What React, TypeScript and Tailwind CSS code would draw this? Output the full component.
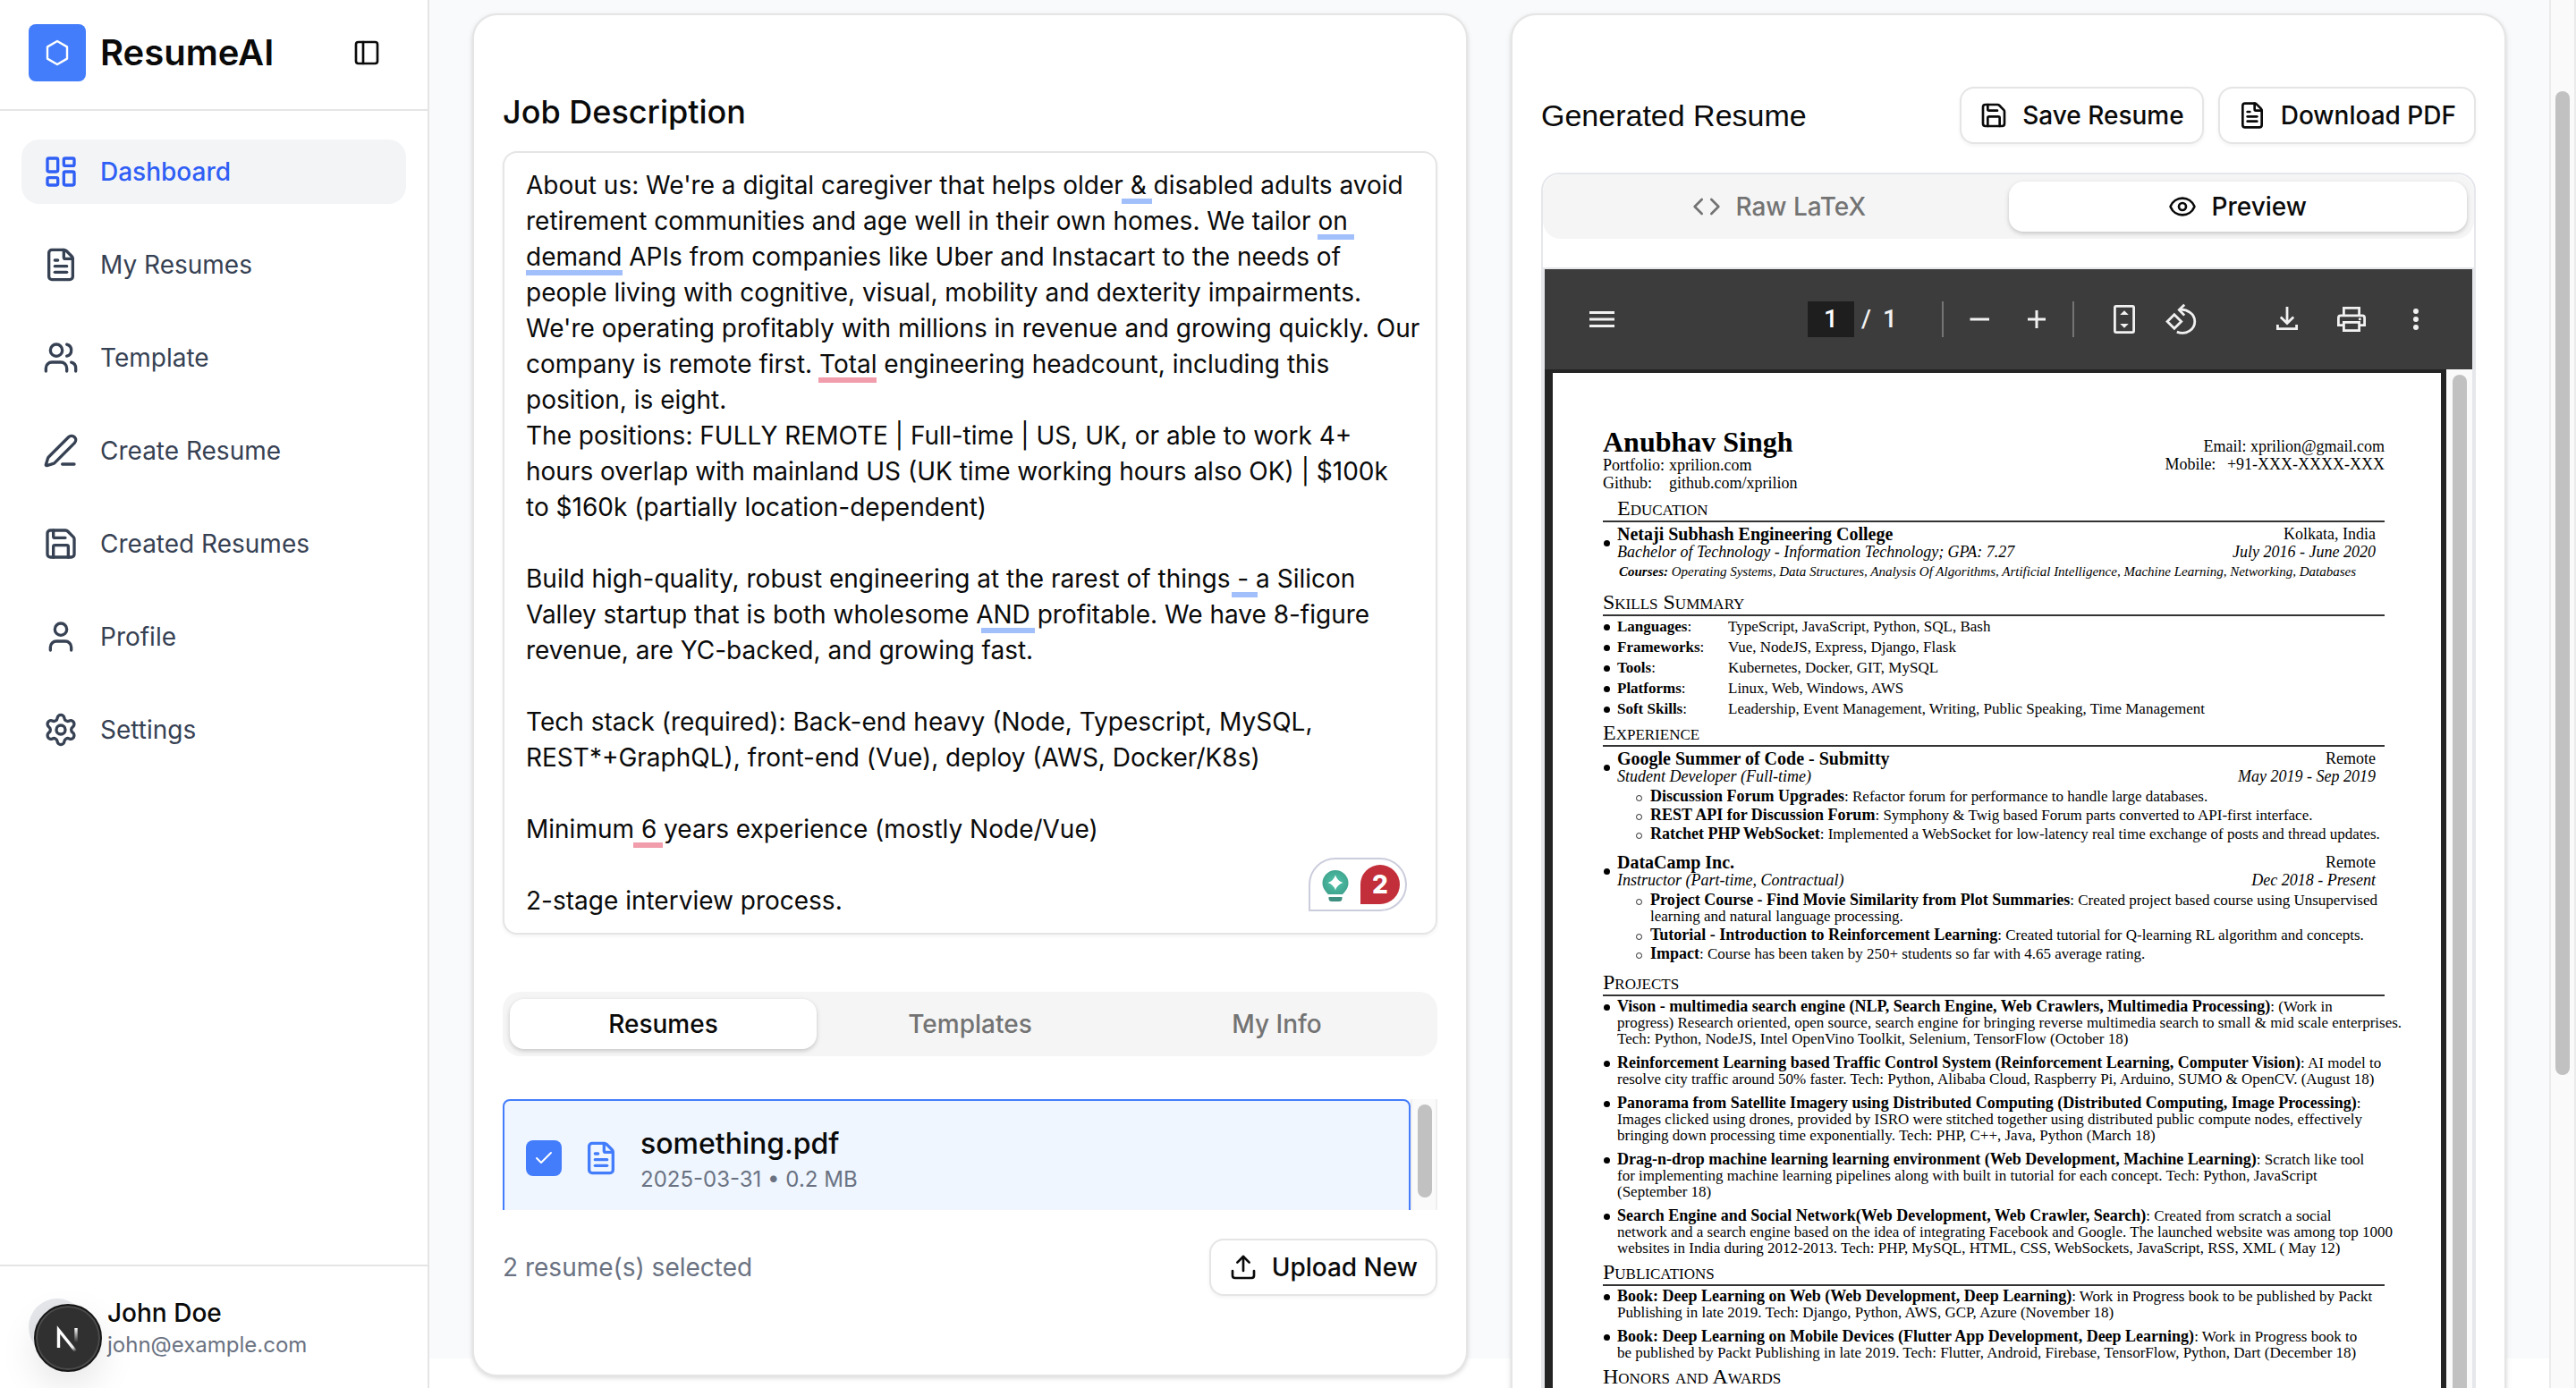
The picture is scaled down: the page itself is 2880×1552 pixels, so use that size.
import type { ComponentType, ReactNode } from "react";
import {
  Check,
  Code,
  Eye,
  FileText,
  LayoutDashboard,
  PanelLeft,
  PenLine,
  Save,
  Settings,
  Upload,
  User,
  Users,
} from "lucide-react";

type IconType = ComponentType<{ className?: string; strokeWidth?: number }>;

const NAV: { label: string; icon: IconType; active?: boolean }[] = [
  { label: "Dashboard", icon: LayoutDashboard, active: true },
  { label: "My Resumes", icon: FileText },
  { label: "Template", icon: Users },
  { label: "Create Resume", icon: PenLine },
  { label: "Created Resumes", icon: Save },
  { label: "Profile", icon: User },
  { label: "Settings", icon: Settings },
];

const JOB_TEXT = `About us: We're a digital caregiver that helps older & disabled adults avoid retirement communities and age well in their own homes. We tailor on demand APIs from companies like Uber and Instacart to the needs of people living with cognitive, visual, mobility and dexterity impairments. We're operating profitably with millions in revenue and growing quickly. Our company is remote first. Total engineering headcount, including this position, is eight.
The positions: FULLY REMOTE | Full-time | US, UK, or able to work 4+ hours overlap with mainland US (UK time working hours also OK) | $100k
to $160k (partially location-dependent)

Build high-quality, robust engineering at the rarest of things - a Silicon Valley startup that is both wholesome AND profitable. We have 8-figure revenue, are YC-backed, and growing fast.

Tech stack (required): Back-end heavy (Node, Typescript, MySQL, REST*+GraphQL), front-end (Vue), deploy (AWS, Docker/K8s)

Minimum 6 years experience (mostly Node/Vue)

2-stage interview process.`;

function Sidebar() {
  return (
    <aside className="flex w-[480px] shrink-0 flex-col border-r-2 border-[#e5e5e5] bg-white">
      <div className="flex items-center gap-4 border-b-2 border-[#e5e5e5] px-8 pt-[27px] pb-[31px]">
        <div className="flex size-16 items-center justify-center rounded-lg bg-[#437dfc]">
          <svg viewBox="0 0 32 32" className="size-8" fill="none" stroke="#fff" strokeWidth="2.4" strokeLinejoin="round">
            <path d="M16 3 27 9.4V22.6L16 29 5 22.6V9.4Z" />
          </svg>
        </div>
        <span className="flex-1 text-[40px] leading-[56px] font-semibold">ResumeAI</span>
        <button type="button" aria-label="Toggle sidebar" className="mr-5 flex size-8 items-center justify-center">
          <PanelLeft className="size-8" />
        </button>
      </div>
      <nav className="flex flex-1 flex-col gap-8 px-6 pt-8">
        {NAV.map(({ label, icon: Icon, active }) => (
          <a
            key={label}
            href="#"
            className={
              active
                ? "flex h-[72px] items-center gap-6 rounded-[20px] bg-[#f3f4f6] px-6 text-[28px] font-medium text-[#2f5ff5]"
                : "flex h-[72px] items-center gap-6 rounded-[20px] px-6 text-[28px] text-[#364153]"
            }
          >
            <Icon className="size-10" />
            {label}
          </a>
        ))}
      </nav>
      <div className="flex items-center gap-6 border-t-2 border-[#e5e5e5] p-8">
        <div className="relative size-16 rounded-full bg-[#e5e7eb]">
          <button
            type="button"
            aria-label="Open developer tools"
            className="absolute top-1.5 left-1.5 flex size-[76px] items-center justify-center rounded-full border-2 border-[#171717] bg-[#303030] shadow-[0_16px_40px_rgba(0,0,0,0.10)] inset-ring-2 inset-ring-[#4b4b4b]"
          >
            <svg viewBox="0 0 40 40" className="size-10" fill="none">
              <defs>
                <linearGradient id="nDiagonal" x1="22" y1="23" x2="30" y2="34" gradientUnits="userSpaceOnUse">
                  <stop stopColor="#fff" />
                  <stop offset="0.6" stopColor="#fff" stopOpacity="0.9" />
                  <stop offset="1" stopColor="#fff" stopOpacity="0" />
                </linearGradient>
                <linearGradient id="nStem" x1="29" y1="9" x2="29" y2="25" gradientUnits="userSpaceOnUse">
                  <stop stopColor="#fff" />
                  <stop offset="1" stopColor="#fff" stopOpacity="0" />
                </linearGradient>
              </defs>
              <path d="M9.500 31V11L29.500 36" stroke="url(#nDiagonal)" strokeWidth="3.400" />
              <path d="M29 9V25" stroke="url(#nStem)" strokeWidth="3.400" />
            </svg>
          </button>
        </div>
        <div className="flex flex-col">
          <span className="text-[28px] leading-10 font-medium">John Doe</span>
          <span className="text-2xl leading-8 text-[#6a7282]">john@example.com</span>
        </div>
      </div>
    </aside>
  );
}

/** Grammar hints drawn under words of the job description. */
const HINTS = [
  "top-[53px] left-[692px] w-[34px] bg-[#a1bffb]",
  "top-[93px] left-[911px] w-[41px] bg-[#a1bffb]",
  "top-[133px] left-[26px] w-[108px] bg-[#a1bffb]",
  "top-[253px] left-[353px] w-[65px] bg-[#f19dac]",
  "top-[493px] left-[815px] w-[29px] bg-[#a1bffb]",
  "top-[533px] left-[535px] w-[60px] bg-[#a1bffb]",
  "top-[773px] left-[146px] w-[33px] bg-[#f19dac]",
];

function GrammarBadge() {
  return (
    <div className="absolute right-[34px] bottom-[26px] flex h-[60px] w-[110px] items-center justify-between rounded-[30px] rounded-bl-none border-2 border-[#cbcddc] bg-white pr-1.5 pl-3">
      <svg viewBox="0 0 32 40" className="h-10 w-8">
        <defs>
          <radialGradient id="bulb" cx="0.5" cy="0.5" r="0.6">
            <stop stopColor="#4fc5ab" />
            <stop offset="1" stopColor="#3f9f8a" />
          </radialGradient>
        </defs>
        <path d="M16 4a14.500 14.500 0 0 0-14.500 14.500c0 5 3 9 6.500 12.500h16c3.500-3.500 6.500-7.500 6.500-12.500A14.500 14.500 0 0 0 16 4Z" fill="url(#bulb)" />
        <path d="M8.500 34h15v1.500a3.500 3.500 0 0 1-3.500 3.500h-8a3.500 3.500 0 0 1-3.500-3.500Z" fill="#3f9080" />
        <path d="M16 9.500q2 6.500 8.500 8.500Q18 20 16 26.500q-2-6.500-8.500-8.500Q14 16 16 9.500Z" fill="#fff" />
      </svg>
      <span className="flex size-11 items-center justify-center rounded-full rounded-bl-none bg-[#c22f3a] text-[28px] font-extrabold text-white">
        2
      </span>
    </div>
  );
}

const CARD =
  "flex min-w-0 flex-1 flex-col rounded-[28px] border-2 border-[#e5e5e5] bg-white px-8 shadow-[0_2px_6px_rgba(0,0,0,0.1),0_2px_4px_rgba(0,0,0,0.06)]";

function OutlineButton({ icon: Icon, children }: { icon: IconType; children: ReactNode }) {
  return (
    <button
      type="button"
      className="flex h-16 items-center gap-4 rounded-2xl border-2 border-[#e5e5e5] bg-white px-5 text-[28px] font-medium whitespace-nowrap shadow-[0_2px_4px_rgba(0,0,0,0.05)]"
    >
      <Icon className="size-8" />
      {children}
    </button>
  );
}

function Tab({ icon: Icon, active, children }: { icon?: IconType; active?: boolean; children: ReactNode }) {
  return (
    <button
      type="button"
      role="tab"
      aria-selected={!!active}
      className={
        active
          ? "flex h-14 flex-1 items-center justify-center gap-4 rounded-2xl bg-white text-[28px] font-medium shadow-[0_2px_6px_rgba(0,0,0,0.1),0_2px_4px_rgba(0,0,0,0.1)]"
          : "flex h-14 flex-1 items-center justify-center gap-4 rounded-2xl text-[28px] font-medium text-[#737373]"
      }
    >
      {Icon && <Icon className="size-8" />}
      {children}
    </button>
  );
}

function JobCard() {
  return (
    <section className={`${CARD} self-start pt-22 pb-22`}>
      <label htmlFor="job" className="mb-6 text-4xl leading-10 font-medium">
        Job Description
      </label>
      <div className="relative">
        <textarea
          id="job"
          rows={21}
          defaultValue={JOB_TEXT}
          className="block w-full resize-none overflow-hidden rounded-2xl border-2 border-[#e5e5e5] bg-white py-4 pr-4 pl-6 text-[28px] leading-10 shadow-[0_2px_4px_rgba(0,0,0,0.05)] outline-none"
        />
        {HINTS.map((hint) => (
          <span key={hint} className={`absolute h-1.5 ${hint}`} />
        ))}
        <GrammarBadge />
      </div>

      <div role="tablist" className="mt-16 flex h-[72px] items-center rounded-[20px] bg-[#f5f5f5] px-2">
        <Tab active>Resumes</Tab>
        <Tab>Templates</Tab>
        <Tab>My Info</Tab>
      </div>

      <div className="mt-12 flex h-[124px] overflow-hidden">
        <label className="flex h-[132px] flex-1 items-center gap-6 rounded-lg border-2 border-[#437dfc] bg-[#eff6ff] px-6">
          <span className="relative flex size-10 items-center justify-center">
            <input type="checkbox" defaultChecked className="absolute inset-0 size-10 appearance-none rounded-lg bg-[#437dfc]" />
            <Check className="relative size-6 text-white" />
          </span>
          <FileText className="size-10 text-[#437dfc]" />
          <span className="flex flex-col">
            <span className="text-[32px] leading-[48px] font-medium">something.pdf</span>
            <span className="text-2xl leading-8 text-[#6a7282]">2025-03-31 • 0.2 MB</span>
          </span>
        </label>
        <div className="w-[30px] border-x-2 border-[#efefef] bg-[#fafafa] px-1.5 pt-1.5">
          <div className="h-[104px] w-4 rounded-full bg-[#c1c1c1]" />
        </div>
      </div>

      <div className="mt-8 flex items-center justify-between">
        <span className="text-[28px] text-[#6a7282]">2 resume(s) selected</span>
        <OutlineButton icon={Upload}>Upload New</OutlineButton>
      </div>
    </section>
  );
}

function ToolButton({ label, children }: { label: string; children: ReactNode }) {
  return (
    <button type="button" aria-label={label} className="size-10 text-[#f1f1f1]">
      <svg viewBox="0 0 40 40" className="size-10" fill="none" stroke="currentColor" strokeWidth="2.800">
        {children}
      </svg>
    </button>
  );
}

function PdfToolbar() {
  return (
    <div className="flex h-28 items-center bg-[#3c3c3c] pr-[43px] pl-11 font-[Roboto,sans-serif] text-[28px] text-[#f1f1f1]">
      <div className="flex flex-1">
        <ToolButton label="Menu">
          <path d="M6 12.500h28M6 20h28M6 27.500h28" strokeWidth="3" />
        </ToolButton>
      </div>
      <div className="flex items-center pr-3">
        <input
          aria-label="Page number"
          defaultValue="1"
          className="h-10 w-[52px] bg-[#1e1e1e] text-center font-medium text-white outline-none"
        />
        <span className="ml-2 w-6 font-medium">/</span>
        <span className="w-[66px] font-medium">1</span>
        <span className="h-10 w-0.5 bg-[#757575]" />
        <div className="ml-5 flex gap-6">
          <ToolButton label="Zoom out">
            <path d="M9.500 20h21.500" strokeWidth="3" />
          </ToolButton>
          <ToolButton label="Zoom in">
            <path d="M10 20h20M20 10v20" strokeWidth="3" />
          </ToolButton>
        </div>
        <span className="ml-5 h-10 w-0.5 bg-[#757575]" />
        <div className="ml-9 flex gap-6">
          <ToolButton label="Fit to page">
            <rect x="9.400" y="5.400" width="21.200" height="29.200" rx="1.500" />
            <path d="M20 10.300 24.800 15H15.200ZM20 29.700 24.800 25H15.200Z" fill="currentColor" stroke="none" />
          </ToolButton>
          <ToolButton label="Rotate">
            <path d="M11.900 14.700 19.700 22.500 11.900 30.300 4.100 22.500Z" />
            <path d="M17 9.300c9.500-1 17.800 4.700 17.800 13.200 0 8.700-9.500 15.800-20 11.600" />
            <path d="M23.200 3.800 17.300 9.500 23.200 15.600" />
          </ToolButton>
        </div>
      </div>
      <div className="flex flex-1 justify-end gap-8">
        <ToolButton label="Download">
          <path d="M20 6v18M12.800 17.500 20 24.500l7.200-7M9.400 26v4.600h21.200V26" />
        </ToolButton>
        <ToolButton label="Print">
          <path d="M11.400 15V7.400h17.200V15M11.400 26.600H5.400V18.400q0-2.500 2.500-2.500h24.200q2.500 0 2.500 2.500v8.200h-6" />
          <rect x="11.400" y="23.400" width="17.200" height="9.200" />
          <circle cx="29.300" cy="19.700" r="1.500" fill="currentColor" stroke="none" />
        </ToolButton>
        <ToolButton label="More actions">
          <g fill="currentColor" stroke="none">
            <circle cx="20" cy="11" r="3" />
            <circle cx="20" cy="20" r="3" />
            <circle cx="20" cy="29" r="3" />
          </g>
        </ToolButton>
      </div>
    </div>
  );
}

function Heading({ children }: { children: ReactNode }) {
  return (
    <h3 className="mb-[3px] border-b-2 border-[#333] text-2xl leading-7 [font-variant:small-caps]">{children}</h3>
  );
}

function Dot() {
  return (
    <span className="flex h-[18px] w-4 shrink-0 items-center">
      <span className="ml-px size-[7px] rounded-full bg-black" />
    </span>
  );
}

function Position({ title, place, role, dates }: { title: string; place: string; role: string; dates: string }) {
  return (
    <div className="flex items-center text-[18px] leading-5">
      <Dot />
      <div className="flex-1">
        <div className="flex h-5 justify-between pr-[10px]">
          <b className="text-xl leading-5">{title}</b>
          <span>{place}</span>
        </div>
        <div className="flex justify-between pr-[10px] italic">
          <span>{role}</span>
          <span>{dates}</span>
        </div>
      </div>
    </div>
  );
}

interface Entry {
  title: string;
  lead: string;
  more?: string[];
}

function EntryText({ title, lead, more = [] }: Entry) {
  return (
    <p className="whitespace-nowrap">
      <b className="text-[18px] leading-4">{title}</b>: {lead}
      {more.map((line) => (
        <span key={line} className="block">
          {line}
        </span>
      ))}
    </p>
  );
}

function SubList({ items }: { items: Entry[] }) {
  return (
    <ul className="mt-1 flex flex-col gap-[3px] pl-[37px]">
      {items.map((item) => (
        <li key={item.title} className="flex">
          <span className="mt-[7px] mr-[9px] size-[7px] shrink-0 rounded-full border border-[#222]" />
          <EntryText {...item} />
        </li>
      ))}
    </ul>
  );
}

function EntryList({ items }: { items: Entry[] }) {
  return (
    <ul className="flex flex-col gap-[9px]">
      {items.map((item) => (
        <li key={item.title} className="flex">
          <Dot />
          <EntryText {...item} />
        </li>
      ))}
    </ul>
  );
}

const SKILLS = [
  ["Languages", "TypeScript, JavaScript, Python, SQL, Bash"],
  ["Frameworks", "Vue, NodeJS, Express, Django, Flask"],
  ["Tools", "Kubernetes, Docker, GIT, MySQL"],
  ["Platforms", "Linux, Web, Windows, AWS"],
  ["Soft Skills", "Leadership, Event Management, Writing, Public Speaking, Time Management"],
];

const SUBMITTY: Entry[] = [
  { title: "Discussion Forum Upgrades", lead: "Refactor forum for performance to handle large databases." },
  { title: "REST API for Discussion Forum", lead: "Symphony & Twig based Forum parts converted to API-first interface." },
  {
    title: "Ratchet PHP WebSocket",
    lead: "Implemented a WebSocket for low-latency real time exchange of posts and thread updates.",
  },
];

const DATACAMP: Entry[] = [
  {
    title: "Project Course - Find Movie Similarity from Plot Summaries",
    lead: "Created project based course using Unsupervised",
    more: ["learning and natural language processing."],
  },
  {
    title: "Tutorial - Introduction to Reinforcement Learning",
    lead: "Created tutorial for Q-learning RL algorithm and concepts.",
  },
  { title: "Impact", lead: "Course has been taken by 250+ students so far with 4.65 average rating." },
];

const PROJECTS: Entry[] = [
  {
    title: "Vison - multimedia search engine (NLP, Search Engine, Web Crawlers, Multimedia Processing)",
    lead: "(Work in",
    more: [
      "progress) Research oriented, open source, search engine for bringing reverse multimedia search to small & mid scale enterprises.",
      "Tech: Python, NodeJS, Intel OpenVino Toolkit, Selenium, TensorFlow (October 18)",
    ],
  },
  {
    title: "Reinforcement Learning based Traffic Control System (Reinforcement Learning, Computer Vision)",
    lead: "AI model to",
    more: [
      "resolve city traffic around 50% faster. Tech: Python, Alibaba Cloud, Raspberry Pi, Arduino, SUMO & OpenCV. (August 18)",
    ],
  },
  {
    title: "Panorama from Satellite Imagery using Distributed Computing (Distributed Computing, Image Processing)",
    lead: "",
    more: [
      "Images clicked using drones, provided by ISRO were stitched together using distributed public compute nodes, effectively",
      "bringing down processing time exponentially. Tech: PHP, C++, Java, Python (March 18)",
    ],
  },
  {
    title: "Drag-n-drop machine learning learning environment (Web Development, Machine Learning)",
    lead: "Scratch like tool",
    more: [
      "for implementing machine learning pipelines along with built in tutorial for each concept. Tech: Python, JavaScript",
      "(September 18)",
    ],
  },
  {
    title: "Search Engine and Social Network(Web Development, Web Crawler, Search)",
    lead: "Created from scratch a social",
    more: [
      "network and a search engine based on the idea of integrating Facebook and Google. The launched website was among top 1000",
      "websites in India during 2012-2013. Tech: PHP, MySQL, HTML, CSS, WebSockets, JavaScript, RSS, XML ( May 12)",
    ],
  },
];

const BOOKS: Entry[] = [
  {
    title: "Book: Deep Learning on Web (Web Development, Deep Learning)",
    lead: "Work in Progress book to be published by Packt",
    more: ["Publishing in late 2019. Tech: Django, Python, AWS, GCP, Azure (November 18)"],
  },
  {
    title: "Book: Deep Learning on Mobile Devices (Flutter App Development, Deep Learning)",
    lead: "Work in Progress book to",
    more: ["be published by Packt Publishing in late 2019. Tech: Flutter, Android, Firebase, TensorFlow, Python, Dart (December 18)"],
  },
];

function ResumePage() {
  return (
    <article className="min-w-0 flex-1 bg-white pt-[61px] pr-[63px] pb-16 pl-14 font-['Liberation_Serif',serif] text-[17px] leading-[18px] text-black">
      <header className="flex justify-between text-[18px] leading-5">
        <div>
          <h2 className="text-[32px] leading-8 font-bold">Anubhav Singh</h2>
          <div className="grid grid-cols-[74px_auto]">
            <span>Portfolio:</span>
            <span>xprilion.com</span>
            <span>Github:</span>
            <span>github.com/xprilion</span>
          </div>
        </div>
        <div className="mt-[11px] text-right">
          <div>Email: xprilion@gmail.com</div>
          <div>
            Mobile: <span className="ml-2">+91-XXX-XXXX-XXX</span>
          </div>
        </div>
      </header>

      <section className="mt-1">
        <h3 className="mb-[3px] border-b-2 border-[#333] pl-4 text-2xl leading-7 [font-variant:small-caps]">Education</h3>
        <Position
          title="Netaji Subhash Engineering College"
          place="Kolkata, India"
          role="Bachelor of Technology - Information Technology; GPA: 7.27"
          dates="July 2016 - June 2020"
        />
        <p className="mt-[3px] pl-[18px] text-[15px] whitespace-nowrap italic">
          <b>Courses:</b> Operating Systems, Data Structures, Analysis Of Algorithms, Artificial Intelligence, Machine
          Learning, Networking, Databases
        </p>
      </section>

      <section className="mt-[11px]">
        <Heading>Skills Summary</Heading>
        <ul className="flex flex-col gap-[5px]">
          {SKILLS.map(([name, value]) => (
            <li key={name} className="flex h-[18px]">
              <Dot />
              <span className="w-[124px]">
                <b>{name}</b>:
              </span>
              <span>{value}</span>
            </li>
          ))}
        </ul>
      </section>

      <section className="mt-[3px]">
        <Heading>Experience</Heading>
        <Position
          title="Google Summer of Code - Submitty"
          place="Remote"
          role="Student Developer (Full-time)"
          dates="May 2019 - Sep 2019"
        />
        <SubList items={SUBMITTY} />
        <div className="h-3" />
        <Position title="DataCamp Inc." place="Remote" role="Instructor (Part-time, Contractual)" dates="Dec 2018 - Present" />
        <SubList items={DATACAMP} />
      </section>

      <section className="mt-2">
        <Heading>Projects</Heading>
        <EntryList items={PROJECTS} />
      </section>

      <section className="mt-[3px]">
        <Heading>Publications</Heading>
        <EntryList items={BOOKS} />
      </section>

      <section className="mt-[3px]">
        <Heading>Honors and Awards</Heading>
      </section>
    </article>
  );
}

function PreviewCard() {
  return (
    <section className={`${CARD} pt-20`}>
      <div className="flex items-center gap-4">
        <h2 className="flex-1 font-['Liberation_Sans',Arial,sans-serif] text-[34px]">Generated Resume</h2>
        <OutlineButton icon={Save}>Save Resume</OutlineButton>
        <OutlineButton icon={FileText}>Download PDF</OutlineButton>
      </div>
      <div className="mt-8 rounded-[20px] border-2 border-[#e5e7eb]">
        <div role="tablist" className="flex h-[72px] items-center rounded-[20px] bg-[#f5f5f5] px-2">
          <Tab icon={Code}>Raw LaTeX</Tab>
          <Tab icon={Eye} active>
            Preview
          </Tab>
        </div>
        <div className="mt-8 border-2 border-[#e5e7eb]">
          <PdfToolbar />
          <div className="flex bg-[#242424]">
            <div className="flex min-w-0 flex-1 pt-1 pr-1.5 pl-[9px]">
              <ResumePage />
            </div>
            <div className="w-[29px] bg-[#fafafa] px-[7px] pt-1.5">
              <div className="h-full w-4 rounded-full bg-[#c1c1c1]" />
            </div>
          </div>
        </div>
      </div>
    </section>
  );
}

export default function App() {
  return (
    <div className="flex h-screen overflow-hidden bg-white font-[Inter,sans-serif] text-[#0a0a0a]">
      <Sidebar />
      <main className="flex min-w-0 flex-1 flex-col overflow-hidden">
        <div className="mb-[33px] flex min-h-0 flex-1 items-start gap-12 bg-[#f9fafb] px-12 pt-[15px]">
          <JobCard />
          <PreviewCard />
        </div>
      </main>
      <div className="w-[30px] shrink-0 border-x-2 border-[#ebebeb] bg-[#fafafa] px-[5px] pt-[102px]">
        <div className="h-[1100px] w-4 rounded-full bg-[#c1c1c1]" />
      </div>
    </div>
  );
}
